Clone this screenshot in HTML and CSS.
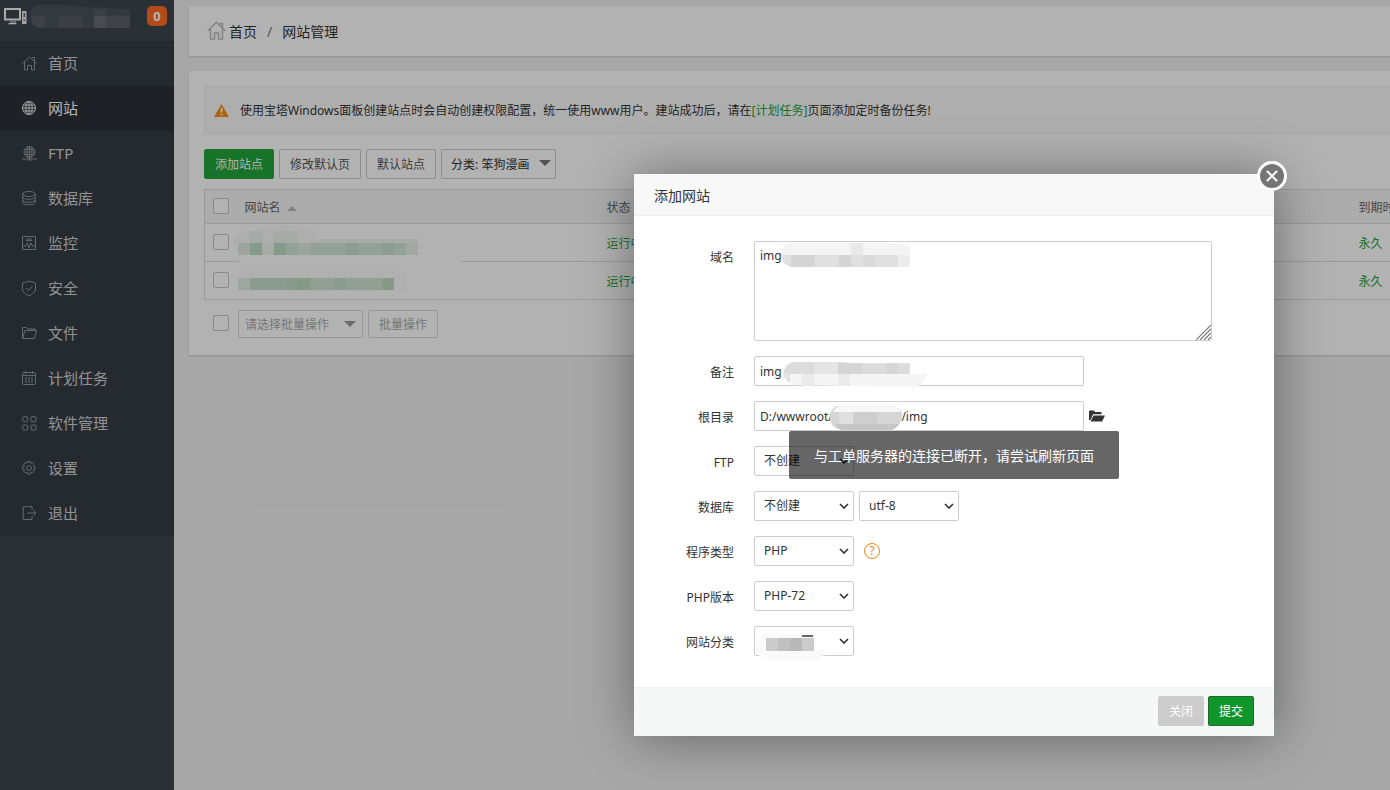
FILE: index.html
```html
<!DOCTYPE html>
<html lang="zh-CN">
<head>
<meta charset="utf-8">
<title>网站管理</title>
<link rel="stylesheet" href="styles.css">
</head>
<body>
<div class="page">
  <aside class="sidebar">
    <header class="host">
      <svg class="host-icon" width="23" height="17" viewBox="0 0 23 17"><path d="M1 1h15v10.500H1z" fill="none" stroke="#f4f4f4" stroke-width="2"/><path d="M6 13.500h6v1H6zM4.500 15h8v1.200h-8z" fill="#f4f4f4"/><path d="M18 3h4.500v13H18z" fill="#e8e8e8"/><path d="M19.500 5h1.500v4h-1.500zM19.500 11.500h1.500v1.500h-1.500z" fill="#5b626b"/></svg>
      <svg class="host-mask" width="100" height="23" viewBox="0 0 100 23"><path d="M9 0h26q30 3 65 4v19H9Q0 22 0 11T9 0z" fill="#4b515b"/><path d="M1 11h14v12H9Q3 21 1 11z" fill="#585d66"/><path d="M28 11h24v12H28zM64 4h12v7H64z" fill="#575b62"/><path d="M64 11h12v12H64z" fill="#686c73"/><path d="M76 11h24v12H76z" fill="#5b5f66"/></svg>
      <span class="badge">0</span>
    </header>
    <nav class="menu">
      <a href="#"><svg class="icon" viewBox="0 0 15 15"><path d="M.5 7.500 7.500 1l7 6.500M2.500 6v8h3V9.500h4V14h3V6M10 1.500h2.500V5"/></svg>首页</a>
      <a href="#" class="active"><svg class="icon" viewBox="0 0 15 15"><circle cx="7" cy="7" r="6.500"/><ellipse cx="7" cy="7" rx="3.200" ry="6.500"/><path d="M7 .5v13M.5 7h13M1.500 4h11M1.500 10h11"/></svg>网站</a>
      <a href="#"><svg class="icon" viewBox="0 0 15 15"><circle cx="7.500" cy="6" r="5.500"/><ellipse cx="7.500" cy="6" rx="2.600" ry="5.500"/><path d="M7.500.5v13M2 6h11M3 3.500h9M3 8.500h9M0 13h15M5.500 14h4"/></svg>FTP</a>
      <a href="#"><svg class="icon" viewBox="0 0 15 15"><ellipse cx="7" cy="3" rx="6.300" ry="2.500"/><path d="M.7 3v8.500c0 3 12.600 3 12.600 0V3M.7 6c0 3 12.600 3 12.600 0M.7 9c0 3 12.600 3 12.600 0"/></svg>数据库</a>
      <a href="#"><svg class="icon" viewBox="0 0 15 15"><path d="M.5.5h13v13H.5zM4 3h6M4 4.500h6M1 10h3l1.500-3 1.500 5 2-5 1.500 3H13"/></svg>监控</a>
      <a href="#"><svg class="icon" viewBox="0 0 15 15"><path d="M7 .2 13.500 2v6c0 3-3 5.200-6.500 6.800C3.500 13.200.5 11 .5 8V2zM4 7l2.500 2.500L10.500 5"/></svg>安全</a>
      <a href="#"><svg class="icon" viewBox="0 0 15 15"><path d="M.5 12.500v-11h4L6 3h7v2M.5 12.500l2.500-8h11.500l-2 8z"/></svg>文件</a>
      <a href="#"><svg class="icon" viewBox="0 0 15 15"><rect x=".5" y="1.500" width="13" height="12" rx="1"/><path d="M.5 4.500h13M3.500 0v3M10.500 0v3"/><path d="M3 7h9M3 9h9M3 11h9" stroke-dasharray="2 1"/></svg>计划任务</a>
      <a href="#"><svg class="icon" viewBox="0 0 15 15"><rect x=".7" y=".7" width="5" height="5" rx="1"/><rect x="9" y=".7" width="5" height="5" rx="1"/><rect x=".7" y="9" width="5" height="5" rx="1"/><rect x="9" y="9" width="5" height="5" rx="1"/></svg>软件管理</a>
      <a href="#"><svg class="icon" viewBox="0 0 15 15"><circle cx="7" cy="7" r="2.400"/><path d="M5.700.5h2.600l.4 1.800 1.500-1 2 2-1 1.500 1.800.6v2.600l-1.800.5 1 1.700-2 2-1.500-1-.4 1.800H5.700l-.5-1.800-1.600 1-2-2 1-1.700L.7 8V5.400l1.900-.6-1-1.500 2-2 1.600 1z"/></svg>设置</a>
      <a href="#"><svg class="icon" viewBox="0 0 15 15"><path d="M10 4V.700H1.200v12.800H10V10M5.500 7H14M11.500 4.500 14 7l-2.500 2.500"/></svg>退出</a>
    </nav>
  </aside>

  <main class="main">
    <nav class="panel crumbs">
      <svg width="19" height="19" viewBox="0 0 19 19" fill="none" stroke="#bcbcbc" stroke-width="1.500"><path d="M.7 9.700 9.500 1.300l8.800 8.400M3.500 8v10h4v-6h4v6h4V8M12.500 2.500h3v4"/></svg>
      <a href="#">首页</a><span class="slash">/</span><span>网站管理</span>
    </nav>

    <section class="panel content">
      <p class="notice">
        <svg width="15" height="13" viewBox="0 0 15 13"><path d="M7.500 0 15 13H0z" fill="#f69110"/><path d="M6.700 4h1.700v4.500H6.700zM6.700 9.700h1.700v1.600H6.700z" fill="#fff"/></svg>
        <span>使用宝塔Windows面板创建站点时会自动创建权限配置，统一使用www用户。建站成功后，请在<a href="#">[计划任务]</a>页面添加定时备份任务!</span>
      </p>
      <div class="toolbar">
        <button class="btn primary">添加站点</button>
        <button class="btn">修改默认页</button>
        <button class="btn">默认站点</button>
        <span class="picker">
          <select aria-label="分类"><option>分类: 笨狗漫画</option></select>
          <svg width="12" height="6" viewBox="0 0 12 6"><path d="M0 0h12L6 6z"/></svg>
        </span>
      </div>
      <table class="sites">
        <colgroup><col class="c-check"><col class="c-name"><col class="c-state"><col></colgroup>
        <thead>
          <tr><th><input type="checkbox" aria-label="全选"></th><th>网站名 <svg class="sort" width="10" height="5" viewBox="0 0 10 5"><path d="M5 0l5 5H0z"/></svg></th><th>状态</th><th>到期时间</th></tr>
        </thead>
        <tbody>
          <tr><td><input type="checkbox" aria-label="选择"></td><td class="masked">
            <svg class="row-mask" width="230" height="38" viewBox="0 0 230 38">
              <path d="M6 32h222v6H6z" fill="#fff"/>
              <path d="M8 8Q50-2 70 3t14 12v13H6Q-2 20 1 13z" fill="#f8faf8"/>
              <path d="M17 7h12v12H17zM41 7h12v12H41zM53 7h12v12H53z" fill="#eef5ef"/>
              <path d="M84 15h101v5H84z" fill="#f1f7f2"/>
              <path d="M5 19h180v12H5z" fill="#d3e8d8"/>
              <path d="M5 19h12v12H5zM65 19h12v12H65z" fill="#e0eee3"/><path d="M29 19h12v12H29z" fill="#eff6f0"/>
              <path d="M17 19h12v12H17zM41 19h12v12H41z" fill="#bddfc9"/><path d="M113 19h12v12h-12zM149 19h12v12h-12z" fill="#c6e1ce"/>
              <path d="M173 19h12v12h-12z" fill="#e7f1eb"/>
            </svg></td><td class="ok">运行中</td><td class="ok">永久</td></tr>
          <tr><td><input type="checkbox" aria-label="选择"></td><td class="masked">
            <svg class="row-mask" width="230" height="38" viewBox="0 0 230 38">
              <path d="M5 9h168v20H5z" fill="#fbfcfb"/>
              <path d="M5 16h156v12H5z" fill="#d0e5d3"/><path d="M5 16h12v12H5z" fill="#e1eee4"/>
              <path d="M17 16h36v12H17zM101 16h12v12h-12z" fill="#c8dfce"/><path d="M65 16h12v12H65zM149 16h12v12h-12z" fill="#bdddc0"/><path d="M53 16h12v12H53z" fill="#c1dfcb"/>
            </svg></td><td class="ok">运行中</td><td class="ok">永久</td></tr>
        </tbody>
      </table>
      <div class="batch">
        <input type="checkbox" aria-label="批量选择">
        <span class="picker">
          <select disabled aria-label="批量操作"><option>请选择批量操作</option></select>
          <svg width="12" height="6" viewBox="0 0 12 6"><path d="M0 0h12L6 6z"/></svg>
        </span>
        <button class="btn" disabled>批量操作</button>
      </div>
    </section>
  </main>

  <div class="shade"></div>

  <form class="dialog">
    <h2 class="dialog-title">添加网站</h2>
    <button type="button" class="close" aria-label="关闭窗口"><svg width="12" height="12" viewBox="0 0 12 12"><path d="M1.500 1.500l9 9M10.500 1.500l-9 9" stroke="#fff" stroke-width="2" stroke-linecap="round"/></svg></button>
    <div class="fields">
      <div class="field"><label for="domain">域名</label>
        <div class="control">
          <textarea id="domain">img</textarea>
          <svg class="mask mask-domain" width="132" height="24" viewBox="0 0 132 24"><path d="M12 0h90q16 0 28 3v21H12Q2 22 1 12T12 0z" fill="#f4f4f4"/><path d="M71 0h12v12H71z" fill="#e8e8e8"/><path d="M1 12h129v12H12Q2 22 1 12z" fill="#e0e0e0"/><path d="M11 12h24v12H11zM59 12h12v12H59z" fill="#d4d4d4"/><path d="M83 12h12v12H83z" fill="#dadada"/><path d="M118 12h12v12h-12z" fill="#ededed"/></svg>
          <svg class="grip" width="15" height="15" viewBox="0 0 15 15"><path d="M0 15 15 0M4 15 15 4M8 15l7-7M12 15l3-3" stroke="#777" stroke-width="1.200"/></svg>
        </div>
      </div>
      <div class="field"><label for="note">备注</label>
        <div class="control"><input id="note" type="text" value="img">
          <svg class="mask mask-note" width="144" height="25" viewBox="0 0 144 25"><path d="M10 0h48q10 2 69 1v12H0Q1 2 10 0z" fill="#dcdcdc"/><path d="M31 0h24v13H31z" fill="#e4e4e4"/><path d="M55 1h24v12H55zM103 1h12v12h-12z" fill="#d5d5d5"/><path d="M0 12h144q-2 12-14 13L12 23Q2 20 0 12z" fill="#f5f5f5"/><path d="M19 12h12v12H19zM55 12h12v12H55z" fill="#ebebeb"/><path d="M0 12h7v9Q2 18 0 12z" fill="#e2e2e2"/></svg>
        </div>
      </div>
      <div class="field"><label for="root">根目录</label>
        <div class="control"><input id="root" type="text" value="D:/wwwroot/                      /img">
          <svg class="mask mask-root" width="73" height="26" viewBox="0 0 73 26"><path d="M11 1h49q13 1 12 11t-12 13H11Q0 23 0 12T11 1z" fill="#d6d6d6"/><path d="M9 7h14v12H9z" fill="#e0e0e0"/><path d="M23 7h24v12H23z" fill="#cecece"/><path d="M11 1h49q9 1 11 6H3q2-5 8-6z" fill="#f7f7f7"/><path d="M5 19h64q-4 6-9 6H11q-4-2-6-6z" fill="#c6c6c6"/></svg>
          <button type="button" class="folder" aria-label="选择目录"><svg width="16" height="12" viewBox="0 0 16 12"><path d="M0 10V1.500Q0 .5 1 .5h4l1 1.500h6.500v2.200H4L1.500 10z M4.500 5.500H16L13 11.500H1.500z" fill="#333"/></svg></button>
        </div>
      </div>
      <div class="field"><label for="ftp">FTP</label><div class="control"><select id="ftp"><option>不创建</option></select></div></div>
      <div class="field"><label for="db">数据库</label><div class="control"><select id="db"><option>不创建</option></select><select aria-label="字符集"><option>utf-8</option></select></div></div>
      <div class="field"><label for="type">程序类型</label><div class="control"><select id="type"><option>PHP</option></select><button type="button" class="help">?</button></div></div>
      <div class="field"><label for="php">PHP版本</label><div class="control"><select id="php"><option>PHP-72</option></select></div></div>
      <div class="field"><label for="cat">网站分类</label>
        <div class="control"><select id="cat"><option></option></select>
          <svg class="mask mask-cat" width="70" height="28" viewBox="0 0 70 28"><path d="M10 1h50v15h10q-2 10-14 10H14Q0 24 0 13T10 1z" fill="#fafafa"/><path d="M46 2h11" stroke="#333" stroke-width="1.500"/><path d="M10 4h48v13H10z" fill="#cbcbcb"/><path d="M22 4h12v13H22z" fill="#c0c0c0"/><path d="M34 4h12v13H34z" fill="#b8b8b8"/></svg>
        </div>
      </div>
    </div>
    <footer class="actions"><button type="button" class="cancel">关闭</button><button type="submit" class="submit">提交</button></footer>
  </form>

  <div class="toast" role="alert">与工单服务器的连接已断开，请尝试刷新页面</div>
</div>
</body>
</html>
```
FILE: styles.css
```css
* { box-sizing: border-box; }
html, body { height: 100%; }
body {
  margin: 0;
  overflow: hidden;
  background: #f0f0f0;
  color: #333;
  font: 12px/18px "Noto Sans", "Noto Sans CJK SC", sans-serif;
}
button, input, select, textarea { font: inherit; color: inherit; margin: 0; }
a { text-decoration: none; color: inherit; }
svg { flex: none; }

.page {
  position: relative;
  display: flex;
  min-width: 1908px;
  min-height: 910px;
}

.sidebar { flex: none; width: 174px; background: #3e4550; }
.host { position: relative; display: flex; align-items: center; height: 41px; padding: 0 7px 9px 4px; }
.host-mask { margin-left: 3px; }
.badge {
  margin-left: auto;
  width: 20px;
  border-radius: 5px;
  background: #ff6c24;
  color: #fff;
  font-size: 13px;
  font-weight: bold;
  line-height: 20px;
  text-align: center;
}
.menu { background: #363c45; }
.menu a {
  display: flex;
  align-items: center;
  gap: 12px;
  height: 45px;
  padding: 0 0 2px 22px;
  color: #d2d2d2;
  font-size: 15px;
}
.menu a.active { background: #2c3036; color: #fff; }
.icon { width: 15px; height: 15px; margin: 2px -1px 0 0; fill: none; stroke: #95979b; stroke-width: 1; overflow: visible; }
.active .icon { stroke: #eee; }

.main { flex: 1; padding: 6px 15px; }
.panel { background: #fff; box-shadow: 0 1px 2px rgba(0, 0, 0, .15); }
.crumbs { display: flex; align-items: center; height: 50px; padding: 1px 0 0 18px; margin-bottom: 15px; font-size: 14px; }
.crumbs svg { margin-bottom: 3px; }
.crumbs a { margin-left: 3px; }
.slash { margin: 0 10px; color: #777; }
.content { padding: 15px 15px 17px; }
.notice {
  display: flex;
  align-items: center;
  gap: 11px;
  height: 48px;
  margin: 0 0 15px;
  padding: 2px 0 0 9px;
  border: 1px solid #eee;
  background: #fafafa;
}
.notice svg { margin-bottom: 2px; }
.notice a, .ok { color: #20a53a; }
.toolbar { display: flex; gap: 5px; margin-bottom: 10px; }
.btn {
  height: 30px;
  padding: 2px 10px 0;
  border: 1px solid #ccc;
  border-radius: 2px;
  background: #fff;
  color: #555;
}
.btn.primary { background: #20a53a; border-color: #20a53a; color: #fff; }
.picker { position: relative; display: flex; }
.picker select {
  appearance: none;
  width: 115px;
  border: 1px solid #ccc;
  border-radius: 2px;
  background: #fff;
  padding: 2px 9px 0;
  opacity: 1;
}
.picker svg { position: absolute; right: 5px; top: 11px; fill: #777; }

.sites { width: 100%; table-layout: fixed; border-collapse: collapse; border: 1px solid #ddd; }
.c-check { width: 32px; }
.c-name { width: 362px; }
.c-state { width: 752px; }
.sites th, .sites td { height: 38px; padding: 2px 8px 0; border-bottom: 1px solid #ddd; text-align: left; font-weight: normal; }
.sites th { height: 34px; background: #f6f6f6; color: #666; }
.sites .ok { color: #20a53a; }
.sort { margin: 0 0 1px 3px; fill: #bbb; }
.masked { position: relative; }
.row-mask { position: absolute; left: -4px; top: 0; }
input[type="checkbox"] {
  appearance: none;
  display: block;
  width: 16px;
  height: 16px;
  border: 1px solid #c4c4c4;
  border-radius: 2px;
  background: #fff;
}
.sites input { margin-bottom: 4px; }
.batch { display: flex; gap: 5px; margin-top: 10px; padding-left: 9px; }
.batch input { margin: 5px 4px 0 0; }
.batch select { width: 125px; padding: 2px 6px 0; color: #aaa; border-color: #d8d8d8; }
.batch .btn, .batch select { height: 28px; }
.batch .btn { border-color: #d8d8d8; color: #aaa; }
.batch .picker svg { right: 7px; fill: #999; }

.shade { position: absolute; inset: 0; background: rgba(0, 0, 0, .3); }

.dialog {
  position: absolute;
  left: 50%;
  top: 50%;
  transform: translate(-50%, -50%);
  width: 640px;
  background: #fff;
  box-shadow: 1px 1px 50px rgba(0, 0, 0, .4);
}
.dialog-title {
  margin: 0;
  padding: 2px 0 0 20px;
  border-bottom: 1px solid #eee;
  background: #f8f8f8;
  font-size: 14px;
  font-weight: normal;
  line-height: 39px;
}
.close {
  position: absolute;
  right: -13px;
  top: -13px;
  display: grid;
  place-items: center;
  width: 30px;
  height: 30px;
  padding: 0;
  border: 3px solid #fff;
  border-radius: 50%;
  background: #757575;
}
.fields { display: flex; flex-direction: column; gap: 15px; padding: 25px 0 31px; }
.field { display: flex; gap: 20px; }
.field label { width: 100px; text-align: right; line-height: 34px; height: 30px; }
.control { position: relative; display: flex; align-items: center; gap: 5px; }
.control input, .control textarea, .control select {
  height: 30px;
  border: 1px solid #ccc;
  border-radius: 2px;
  background: #fff;
}
.control input { width: 330px; padding: 1px 5px 0; }
.control textarea { display: block; width: 458px; height: 100px; padding: 5px; resize: none; }
.control select {
  appearance: none;
  width: 100px;
  padding: 0 20px 0 9px;
  background: #fff url("data:image/svg+xml,%3Csvg xmlns='http://www.w3.org/2000/svg' width='10' height='6'%3E%3Cpath d='M1 1l4 4 4-4' fill='none' stroke='%23333' stroke-width='1.600'/%3E%3C/svg%3E") no-repeat right 4px center;
}
.mask, .grip { position: absolute; }
.mask-domain { left: 26px; top: 2px; }
.mask-note { left: 29px; top: 6px; }
.mask-root { left: 76px; top: 4px; }
.mask-cat { left: 2px; top: 8px; }
.grip { right: 1px; bottom: 1px; }
.folder { display: flex; padding: 0; border: 0; background: none; }
.help {
  width: 16px;
  height: 16px;
  margin-left: 5px;
  padding: 0;
  border: 1px solid #f78714;
  border-radius: 50%;
  background: none;
  color: #f78714;
  line-height: 14px;
}
.actions {
  display: flex;
  justify-content: flex-end;
  gap: 4px;
  padding: 8px 20px 10px;
  border-top: 1px solid #edf1f2;
  background: #f6f8f8;
}
.actions button { height: 30px; padding: 2px 10px 0; border: 1px solid #ccc; border-radius: 2px; background: #ccc; color: #fff; }
.actions .submit { border-color: #1e6b2b; background: #10952a; }

.toast {
  position: absolute;
  left: 50%;
  top: 50%;
  transform: translate(-50%, -50%);
  padding: 13px 25px 11px;
  border-radius: 2px;
  background: rgba(0, 0, 0, .6);
  color: #fff;
  font-size: 14px;
  line-height: 24px;
  white-space: nowrap;
}
```
